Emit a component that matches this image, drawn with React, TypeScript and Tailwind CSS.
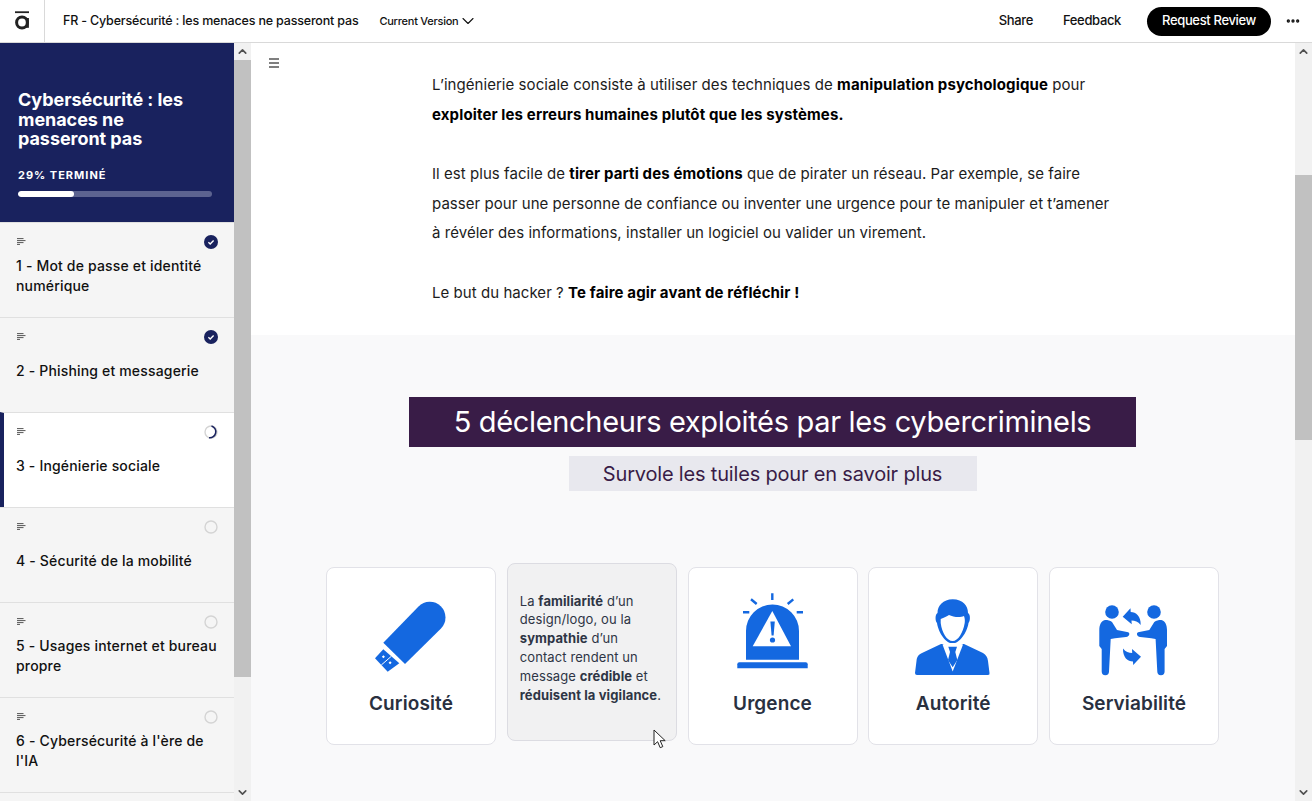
import { ChevronDown, ChevronUp, Ellipsis } from 'lucide-react';

const lessons = [
  { label: '1 - Mot de passe et identité numérique', status: 'done' },
  { label: '2 - Phishing et messagerie', status: 'done' },
  { label: '3 - Ingénierie sociale', status: 'current' },
  { label: '4 - Sécurité de la mobilité', status: 'todo' },
  { label: '5 - Usages internet et bureau propre', status: 'todo' },
  { label: "6 - Cybersécurité à l'ère de l'IA", status: 'todo' },
];

function LinesIcon() {
  return (
    <svg width="9" height="7" viewBox="0 0 9 7" className="ml-px -mt-[2px]">
      <path d="M0 .6h6.5M0 2.6h8.5M0 4.6h6.5M0 6.4h3" stroke="#555" strokeWidth="1" fill="none" />
    </svg>
  );
}

function StatusIcon({ status }: { status: string }) {
  if (status === 'done') {
    return (
      <svg width="14" height="14" viewBox="0 0 14 14">
        <circle cx="7" cy="7" r="7" fill="#19225e" />
        <path d="M4.4 7.2l1.8 1.7 3.4-3.4" stroke="#fff" strokeWidth="1.4" fill="none" />
      </svg>
    );
  }
  return (
    <svg width="14" height="14" viewBox="0 0 14 14">
      <circle cx="7" cy="7" r="6" fill="none" stroke="#d4d4d4" strokeWidth="1.4" />
      {status === 'current' && (
        <path d="M7.5 1a6 6 0 0 1 -2.5 11.7" fill="none" stroke="#19225e" strokeWidth="1.5" />
      )}
    </svg>
  );
}

function Scrollbar({ before, thumb }: { before: string; thumb: string }) {
  return (
    <div className="flex flex-col w-[17px] shrink-0 bg-[#f1f1f1]">
      <div className="h-[17px] flex items-center justify-center">
        <ChevronUp size={13} strokeWidth={3} className="text-[#505050]" />
      </div>
      <div className="flex-1">
        <div className={`${before} ${thumb} bg-[#c1c1c1]`} />
      </div>
      <div className="h-[17px] flex items-center justify-center">
        <ChevronDown size={13} strokeWidth={3} className="text-[#505050]" />
      </div>
    </div>
  );
}

function UsbIcon() {
  return (
    <svg width="80" height="90" viewBox="0 -7 80 90" fill="#1468e0">
      <path d="M12.3 45.7L47.5 9.5A15.7 15.7 0 0 1 70 31.5L34 67Z" />
      <path d="M12.3 52.3L28.3 66.3 16.7 74.7 4 61.3Z" />
      <path d="M20.3 59.3L10.3 68" stroke="#fff" strokeWidth="1" />
      <rect x="11.3" y="58.7" width="2.2" height="2.2" fill="#fff" transform="rotate(45 12.4 59.8)" />
      <rect x="18" y="64.7" width="2.2" height="2.2" fill="#fff" transform="rotate(45 19.1 65.8)" />
    </svg>
  );
}

function AlarmIcon() {
  return (
    <svg width="80" height="90" viewBox="0 -7 80 90" fill="#1468e0">
      <path d="M13 62.7V34a26.5 26.5 0 0 1 53 0v28.7Z" />
      <path d="M6.3 65.3H72.7a2 2 0 0 1 2 2v4H4.3v-4a2 2 0 0 1 2-2Z" />
      <path d="M39.3 14L58 49.3H19.7Z" fill="#fff" />
      <path d="M37.4 24.5h4.4l-1.2 14h-2Z" />
      <circle cx="39.5" cy="43" r="2.6" />
      <path d="M39.3-3.7V3M18 2.3L23.7 7M60.3 2.3L54.7 7M10 15.3h6.3M63.7 15.3H70" stroke="#1468e0" strokeWidth="2.4" fill="none" />
    </svg>
  );
}

function PersonIcon() {
  return (
    <svg width="80" height="90" viewBox="0 -7 80 90" fill="#1468e0">
      <path d="M39.7 2.3C50 2.3 55 9 55 16C57.5 17 57.5 24 55.5 26C54 36 46 46.5 39.7 46.5C33 46.5 25.5 36 24 26C22 24 22 17 24.5 16C24.5 9 30 2.3 39.7 2.3Z" />
      <path d="M27.7 22C31 21 34 19 36 18C40 20 47 21 51 19C52 22 52 24 51.7 26C50 36 45 44 39.7 44C34 44 29 36 27.7 26Z" fill="#fff" />
      <path d="M28 47L9 56C5 58 4 60 3.5 64L2 76Q2 78 4 78H75Q77 78 76.5 76L75 64C74.5 60 73 58 70 56L51 47Z" />
      <path d="M29.5 47.5L39.7 74.5 50 47.5 45 46H34Z" fill="#fff" />
      <path d="M35.3 49.7H44L42.3 55 44.3 63 39.7 70.3 35 63 37 55Z" />
    </svg>
  );
}

function HandsIcon() {
  const figure = 'M11 23C7 24 5.3 28 5.3 33L5.3 49L7.7 52L7.7 74.5A3.6 3.6 0 0 0 15 74.5L16.7 42L21 41.3L32 40C36 39.5 36.5 35 33 35L23 33L18 25C16 23.5 14 23 11 23Z';
  const arrow = 'M28.7 19.7L36.5 11.3L36.7 15C42 15 47 19 46.7 28C44 24.5 41 23.5 37.5 23.5L37.7 27.3Z';
  return (
    <svg width="80" height="90" viewBox="0 -7 80 90" fill="#1468e0">
      <circle cx="18" cy="15" r="6.8" />
      <circle cx="60" cy="15" r="6.8" />
      <path d={figure} />
      <path d={figure} transform="translate(78.3 0) scale(-1 1)" />
      <path d={arrow} />
      <path d={arrow} transform="rotate(180 37.85 39.7)" />
    </svg>
  );
}

function Card({ icon, label }: { icon: React.ReactNode; label: string }) {
  return (
    <div className="h-[178px] bg-white border border-[#e2e2e8] rounded-lg flex flex-col items-center pt-[22px]">
      {icon}
      <div className="mt-[10px] text-[19px] leading-7 font-semibold tracking-[0.1px] text-[#29303f]">{label}</div>
    </div>
  );
}

export default function App() {
  return (
    <div className="h-[801px] w-[1312px] overflow-hidden flex flex-col bg-white font-['Inter',sans-serif] text-[#111]">
      <header className="h-[43px] shrink-0 border-b border-[#d9d9d9] flex items-center">
        <div className="w-[45px] h-full border-r border-[#d9d9d9] flex items-center justify-center">
          <svg width="16" height="20" viewBox="0 0 16 20" fill="none" stroke="#222">
            <path d="M1 1.2h14" strokeWidth="1.8" />
            <circle cx="8" cy="11.5" r="5.4" strokeWidth="3" />
            <path d="M13.4 7v9.8" strokeWidth="3" />
          </svg>
        </div>
        <div className="ml-[18px] text-[12.5px] tracking-[-0.18px] font-medium">FR - Cybersécurité : les menaces ne passeront pas</div>
        <div className="ml-[21px] text-[11px] tracking-[-0.25px] font-medium flex items-center">
          Current Version
          <ChevronDown size={20} strokeWidth={1.3} />
        </div>
        <div className="ml-auto flex items-center text-[13px] tracking-[-0.35px] font-medium">
          <span>Share</span>
          <span className="ml-[30px]">Feedback</span>
          <span className="ml-[26px] h-[29px] w-[124px] rounded-full bg-black text-white flex items-center justify-center">Request Review</span>
          <Ellipsis size={16} strokeWidth={3} className="ml-[14px] mr-[11px]" />
        </div>
      </header>

      <div className="flex-1 flex min-h-0">
        <aside className="w-[234px] shrink-0 overflow-hidden bg-[#f5f5f5]">
          <div className="h-[179px] bg-[#19225e] text-white pl-[18px] pr-[22px] pt-[47px]">
            <h1 className="text-[18px] leading-[19.7px] tracking-[-0.05px] font-bold">Cybersécurité : les menaces ne passeront pas</h1>
            <div className="mt-[18px] text-[11px] leading-4 font-bold tracking-[1px]">29% TERMINÉ</div>
            <div className="mt-2 h-[6px] rounded-full bg-[#5c6390] overflow-hidden">
              <div className="h-full w-[29%] rounded-full bg-white" />
            </div>
          </div>
          {lessons.map(item => (
            <div
              key={item.label}
              className={
                item.status === 'current'
                  ? 'h-[95px] bg-white border-t border-[#e0e0e0] border-l-4 border-l-[#19225e] pl-3 pr-4 pt-[9px]'
                  : 'h-[95px] border-t border-[#e0e0e0] pl-4 pr-4 pt-[9px]'
              }
            >
              <div className="h-5 flex items-center justify-between">
                <LinesIcon />
                <StatusIcon status={item.status} />
              </div>
              <div className="h-12 flex items-center text-[14px] leading-5 font-medium tracking-[0.17px] text-[#111]">
                <div>{item.label}</div>
              </div>
            </div>
          ))}
          <div className="border-t border-[#e0e0e0]" />
        </aside>
        <Scrollbar before="mt-0" thumb="h-[617px]" />

        <main className="relative flex-1 overflow-hidden bg-[#f9f9fa]">
          <svg width="12" height="10" viewBox="0 0 12 10" className="absolute left-[17px] top-[15px]" stroke="#555" strokeWidth="1.4">
            <path d="M1 1h10M1 5h10M1 9h10" />
          </svg>
          <section className="h-[292px] bg-white pt-[27.4px]">
            <div className="w-[682px] mx-auto text-[15px] leading-[29.6px] tracking-[0.05px] text-[#1c1c1c]">
              <p>
                L’ingénierie sociale consiste à utiliser des techniques de <b className="text-black tracking-[0.13px]">manipulation psychologique</b> pour{' '}
                <b className="text-black tracking-[0.13px]">exploiter les erreurs humaines plutôt que les systèmes.</b>
              </p>
              <p className="mt-[29.6px]">
                Il est plus facile de <b className="text-black tracking-[0.13px]">tirer parti des émotions</b> que de pirater un réseau. Par exemple, se faire passer pour une personne de confiance ou inventer une urgence pour te manipuler et t’amener à révéler des informations, installer un logiciel ou valider un virement.
              </p>
              <p className="mt-[29.6px]">
                Le but du hacker ? <b className="text-black tracking-[0.13px]">Te faire agir avant de réfléchir !</b>
              </p>
            </div>
          </section>

          <section className="pt-[62px] pr-px flex flex-col items-center">
            <h2 className="w-[727px] h-[50px] bg-[#391c47] text-white text-[29px] tracking-[-0.33px] flex items-center justify-center">5 déclencheurs exploités par les cybercriminels</h2>
            <div className="mt-[9px] w-[408px] h-[35px] bg-[#e8e8ee] text-[#391c47] text-[20px] tracking-[-0.18px] flex items-center justify-center">Survole les tuiles pour en savoir plus</div>
            <div className="mt-[76px] w-[893px] grid grid-cols-5 gap-[10.75px]">
              <Card icon={<UsbIcon />} label="Curiosité" />
              <div className="h-[178px] -translate-y-1 bg-[#f1f1f2] border border-[#dcdce2] rounded-lg px-3 pb-2 flex items-center text-[13px] leading-[18.8px] tracking-[0.1px] text-[#2e3545]">
                <div>
                  La <b>familiarité</b> d’un design/logo, ou la <b>sympathie</b> d’un contact rendent un message <b>crédible</b> et <b>réduisent la vigilance</b>.
                </div>
              </div>
              <Card icon={<AlarmIcon />} label="Urgence" />
              <Card icon={<PersonIcon />} label="Autorité" />
              <Card icon={<HandsIcon />} label="Serviabilité" />
            </div>
          </section>

          <svg width="14" height="20" viewBox="0 0 14 20" className="absolute left-[402px] top-[686px]">
            <path d="M1 1v15l3.6-3.3 2.6 6 2.6-1.1-2.6-5.9h5Z" fill="#fff" stroke="#222" strokeWidth="1" />
          </svg>
        </main>
        <Scrollbar before="mt-[115px]" thumb="h-[265px]" />
      </div>
    </div>
  );
}
